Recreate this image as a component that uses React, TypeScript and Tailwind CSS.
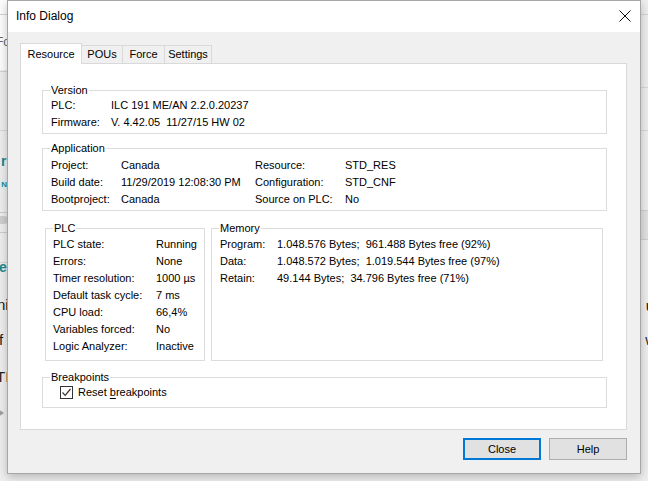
import React from "react";

const F = "font-['Liberation_Sans',Arial,sans-serif]";

function GroupBox({
  title,
  className = "",
  children,
}: {
  title: string;
  className?: string;
  children: React.ReactNode;
}) {
  return (
    <fieldset className={`border border-[#dcdcdc] min-w-0 ${className}`}>
      <legend className="ml-[7px] px-[1px] leading-[13px]">{title}</legend>
      {children}
    </fieldset>
  );
}

function Background() {
  return (
    <div className="absolute inset-0 text-[13px] text-[#222]">
      {/* left strip */}
      <div className="absolute left-0 top-0 w-[12px] h-[70px] bg-white" />
      <div className="absolute left-0 top-[14px] w-[12px] h-px bg-[#d5d5d5]" />
      <div className="absolute left-[-4px] top-[34px] text-[12px] text-[#666] leading-[16px]">Fo</div>
      <div className="absolute left-0 top-[71px] w-[12px] h-px bg-[#d5d5d5]" />
      <div className="absolute left-0 top-[130px] w-[12px] h-px bg-[#dadada]" />
      <div className="absolute left-[1px] top-[153px] text-[14px] font-bold text-[#1f8a90] leading-[16px]">r</div>
      <div className="absolute left-[-4px] top-[179px] w-[11px] h-[11px] bg-[#e6f2f2] text-[8px] font-bold text-[#1f8a90] leading-[11px] text-right">N</div>
      <div className="absolute left-[-6px] top-[216px] w-[14px] h-[8px] rounded bg-[#d0d0d0]" />
      <div className="absolute left-0 top-[212px] w-[12px] h-px bg-[#cfcfcf]" />
      <div className="absolute left-0 top-[232px] w-[12px] h-px bg-[#cfcfcf]" />
      <div className="absolute left-0 top-[262px] w-[12px] h-px bg-[#dadada]" />
      <div className="absolute left-[-1px] top-[259px] text-[14px] font-bold text-[#1f8a90] leading-[16px]">e</div>
      <div className="absolute left-[-3px] top-[296px] text-[15px] leading-[18px]">ni</div>
      <div className="absolute left-[-1px] top-[331px] text-[15px] leading-[18px]">f</div>
      <div className="absolute left-[-4px] top-[368px] text-[15px] leading-[18px]">TI</div>
      <div className="absolute left-[-3px] top-[408px] w-0 h-0 border-y-[5px] border-y-transparent border-l-[7px] border-l-[#a0a0a0]" />
      {/* right strip */}
      <div className="absolute right-0 top-[14px] w-[12px] h-px bg-[#d5d5d5]" />
      <div className="absolute right-0 top-[87px] w-[12px] h-px bg-[#dadada]" />
      <div className="absolute right-0 top-[130px] w-[12px] h-px bg-[#dadada]" />
      <div className="absolute right-0 top-[210px] w-[12px] h-[30px] bg-[#e3e3e3] border-y border-[#d0d0d0]" />
      <div className="absolute right-[-6px] top-[297px] text-[15px] leading-[18px]">u</div>
      <div className="absolute right-[-8px] top-[331px] text-[15px] leading-[18px]">w</div>
    </div>
  );
}

export default function App() {
  return (
    <div className={`relative w-[648px] h-[481px] overflow-hidden bg-[#f0f0f0] ${F}`}>
      <Background />
      <div className="absolute left-[7px] top-0 w-[634px] h-[474px] border border-[#a6a6a6] bg-[#f0f0f0] flex flex-col shadow-[0_3px_10px_rgba(0,0,0,0.25)] text-[11px] text-black">
        {/* title bar */}
        <div className="h-[31px] bg-white flex items-center justify-between pl-[8px] pr-[9px] shrink-0">
          <span className="text-[12px] leading-[16px] mt-[-1px]">Info Dialog</span>
          <svg width="12" height="12" viewBox="0 0 12 12" className="mt-[-1px]">
            <path d="M0.5 0.5 L11.5 11.5 M11.5 0.5 L0.5 11.5" stroke="#111" strokeWidth="1" fill="none" />
          </svg>
        </div>

        {/* body */}
        <div className="flex-1 flex flex-col pl-[12px] pr-[13px] pt-[11px] pb-[13px]">
          {/* tabs */}
          <div className="flex items-end h-[20px]">
            <div className="relative z-10 h-[21px] mb-[-1px] w-[62px] bg-white border-l border-t border-r border-[#d9d9d9] flex items-center justify-center leading-[13px]">
              Resource
            </div>
            <div className="h-[18px] w-[41px] border-t border-r border-[#d9d9d9] flex items-center justify-center leading-[13px]">
              POUs
            </div>
            <div className="h-[18px] w-[42px] border-t border-r border-[#d9d9d9] flex items-center justify-center leading-[13px]">
              Force
            </div>
            <div className="h-[18px] w-[47px] border-t border-r border-[#d9d9d9] flex items-center justify-center leading-[13px]">
              Settings
            </div>
          </div>

          {/* panel */}
          <div className="w-[607px] h-[367px] bg-white border border-[#d9d9d9] flex flex-col pl-[21px] pr-[19px] pt-[20px]">
            <GroupBox title="Version" className="pb-[2px]">
              <div className="grid grid-cols-[60px_1fr] pl-[8px] leading-[17px] whitespace-pre">
                <div>PLC:</div>
                <div>ILC 191 ME/AN 2.2.0.20237</div>
                <div>Firmware:</div>
                <div>V. 4.42.05  11/27/15 HW 02</div>
              </div>
            </GroupBox>

            <GroupBox title="Application" className="mt-[8px] pb-[2px]">
              <div className="grid grid-cols-[70px_134px_90px_1fr] pl-[8px] pt-[2px] leading-[17px] whitespace-pre">
                <div>Project:</div>
                <div>Canada</div>
                <div>Resource:</div>
                <div>STD_RES</div>
                <div>Build date:</div>
                <div>11/29/2019 12:08:30 PM</div>
                <div>Configuration:</div>
                <div>STD_CNF</div>
                <div>Bootproject:</div>
                <div>Canada</div>
                <div>Source on PLC:</div>
                <div>No</div>
              </div>
            </GroupBox>

            <div className="flex gap-[6px] px-[3px] mt-[11px]">
              <GroupBox title="PLC" className="w-[160px] shrink-0 pb-[5px]">
                <div className="grid grid-cols-[103px_1fr] pl-[7px] pt-[1px] leading-[17px] whitespace-pre">
                  <div>PLC state:</div>
                  <div>Running</div>
                  <div>Errors:</div>
                  <div>None</div>
                  <div>Timer resolution:</div>
                  <div>1000 µs</div>
                  <div>Default task cycle:</div>
                  <div>7 ms</div>
                  <div>CPU load:</div>
                  <div>66,4%</div>
                  <div>Variables forced:</div>
                  <div>No</div>
                  <div>Logic Analyzer:</div>
                  <div>Inactive</div>
                </div>
              </GroupBox>
              <GroupBox title="Memory" className="flex-1 pb-[5px] mr-[1px]">
                <div className="grid grid-cols-[57px_1fr] pl-[8px] pt-[1px] leading-[17px] whitespace-pre">
                  <div>Program:</div>
                  <div>1.048.576 Bytes;  961.488 Bytes free (92%)</div>
                  <div>Data:</div>
                  <div>1.048.572 Bytes;  1.019.544 Bytes free (97%)</div>
                  <div>Retain:</div>
                  <div>49.144 Bytes;  34.796 Bytes free (71%)</div>
                </div>
              </GroupBox>
            </div>

            <GroupBox title="Breakpoints" className="mt-[10px] pb-[6px]">
              <div className="flex items-center h-[17px] pl-[17px] gap-[5px]">
                <div className="w-[13px] h-[13px] border border-[#333] bg-white flex items-center justify-center">
                  <svg width="11" height="11" viewBox="0 0 11 11">
                    <path d="M1.5 5.5 L4.2 8.3 L9.5 2" stroke="#333" strokeWidth="1.2" fill="none" />
                  </svg>
                </div>
                <span className="leading-[13px]">
                  Reset <span className="underline underline-offset-[2px]">b</span>reakpoints
                </span>
              </div>
            </GroupBox>
          </div>

          {/* buttons */}
          <div className="flex justify-end gap-[8px] mt-[8px]">
            <button className="w-[78px] h-[22px] bg-[#e1e1e1] border-2 border-[#0078d7] text-[11px] leading-[13px]">
              Close
            </button>
            <button className="w-[78px] h-[22px] bg-[#e1e1e1] border border-[#adadad] text-[11px] leading-[13px]">
              Help
            </button>
          </div>
        </div>
      </div>
    </div>
  );
}
